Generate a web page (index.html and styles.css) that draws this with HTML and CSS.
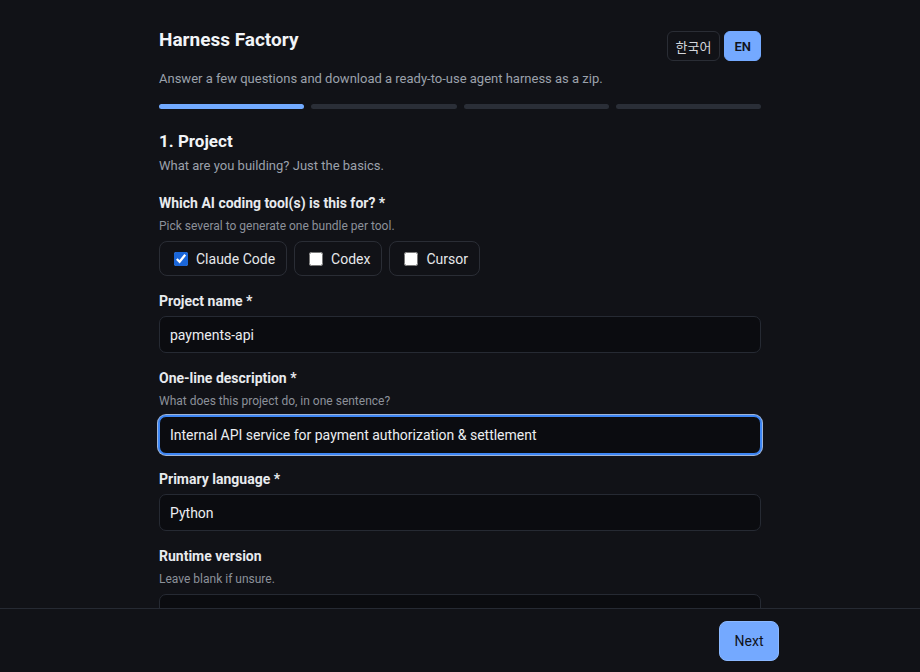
FILE: index.html
```html
<!DOCTYPE html>
<html lang="en">
<head>
  <meta charset="UTF-8">
  <meta name="viewport" content="width=device-width, initial-scale=1.0">
  <title>Harness Factory</title>
  <link rel="stylesheet" href="styles.css">
</head>
<body>
  <main class="wizard">
    <header class="top">
      <h1>Harness Factory</h1>
      <div class="lang">
        <button class="lang-btn">한국어</button>
        <button class="lang-btn active">EN</button>
      </div>
    </header>
    <p class="intro">Answer a few questions and download a ready-to-use agent harness as a zip.</p>

    <div class="progress">
      <span class="step done"></span>
      <span class="step"></span>
      <span class="step"></span>
      <span class="step"></span>
    </div>

    <section class="stage">
      <h2>1. Project</h2>
      <p class="stage-desc">What are you building? Just the basics.</p>

      <div class="field">
        <label class="label">Which AI coding tool(s) is this for? *</label>
        <p class="hint">Pick several to generate one bundle per tool.</p>
        <div class="chips">
          <label class="chip"><input type="checkbox" checked> Claude Code</label>
          <label class="chip"><input type="checkbox"> Codex</label>
          <label class="chip"><input type="checkbox"> Cursor</label>
        </div>
      </div>

      <div class="field">
        <label class="label" for="name">Project name *</label>
        <input class="text" id="name" type="text" value="payments-api">
      </div>

      <div class="field">
        <label class="label" for="desc">One-line description *</label>
        <p class="hint">What does this project do, in one sentence?</p>
        <input class="text focused" id="desc" type="text" value="Internal API service for payment authorization &amp; settlement">
      </div>

      <div class="field">
        <label class="label" for="lang">Primary language *</label>
        <input class="text" id="lang" type="text" value="Python">
      </div>

      <div class="field">
        <label class="label" for="runtime">Runtime version</label>
        <p class="hint">Leave blank if unsure.</p>
        <input class="text" id="runtime" type="text">
      </div>
    </section>
  </main>

  <footer class="actions">
    <div class="actions-inner">
      <button class="next">Next</button>
    </div>
  </footer>
</body>
</html>
```

FILE: styles.css
```css
/* Reset */
* {
  margin: 0;
  padding: 0;
  box-sizing: border-box;
}

body {
  font-family: Roboto, "Noto Sans", "Noto Sans CJK KR", sans-serif;
  background: #111217;
  color: #e6e8eb;
  overflow: hidden;
}

/* Page column */
.wizard {
  width: 602px;
  margin: 0 auto;
  padding: 28px 0 80px;
}

.top {
  display: flex;
  justify-content: space-between;
  align-items: flex-start;
}

.top h1 {
  font-size: 19px;
  line-height: 24px;
  font-weight: 700;
  color: #f2f4f7;
}

.lang {
  display: flex;
  gap: 4px;
  margin-top: 3px;
}

.lang-btn {
  height: 30px;
  padding: 0 8px;
  font-family: inherit;
  font-size: 13px;
  color: #d4d7dc;
  background: transparent;
  border: 1px solid #2a2d35;
  border-radius: 6px;
}

.lang-btn.active {
  padding: 0 9px;
  background: #74a9ff;
  border-color: #74a9ff;
  color: #10131a;
  font-weight: 600;
}

.intro {
  margin-top: 9px;
  font-size: 13px;
  line-height: 18px;
  color: #9ba1ab;
}

/* Step bar */
.progress {
  display: flex;
  gap: 7px;
  margin-top: 16px;
}

.step {
  flex: 1;
  height: 5px;
  border-radius: 3px;
  background: #2a2e37;
}

.step.done {
  background: #72aaff;
}

/* Form */
.stage h2 {
  margin-top: 21px;
  font-size: 17px;
  line-height: 22px;
  font-weight: 700;
  color: #f2f4f7;
}

.stage-desc {
  margin-top: 5px;
  font-size: 13px;
  line-height: 18px;
  color: #9ba1ab;
}

.field {
  margin-top: 15px;
}

.stage-desc + .field {
  margin-top: 18px;
}

.label {
  display: block;
  font-size: 14px;
  line-height: 20px;
  font-weight: 700;
  color: #e8eaee;
  margin-bottom: 5px;
}

.hint {
  font-size: 12px;
  line-height: 16px;
  color: #8c919a;
  margin: 1px 0 7px;
}

.chips {
  display: flex;
  gap: 7px;
}

.chip {
  display: flex;
  align-items: center;
  gap: 8px;
  height: 35px;
  padding: 0 11px 0 14px;
  font-size: 14px;
  color: #e6e8eb;
  border: 1px solid #2a2d35;
  border-radius: 8px;
}

.chip input {
  width: 14px;
  height: 14px;
  margin: 0;
  accent-color: #1a66d9;
}

.text {
  display: block;
  width: 100%;
  height: 37px;
  padding: 0 10px;
  font-family: inherit;
  font-size: 14px;
  color: #eceef1;
  background: #0b0c10;
  border: 1px solid #262a33;
  border-radius: 7px;
  outline: none;
}

.text.focused {
  height: 38px;
  border-color: #3d86f5;
  box-shadow: 0 0 0 1px #3d86f5, 0 0 0 2px #9fb4d6;
}

/* Sticky footer */
.actions {
  position: fixed;
  left: 0;
  right: 0;
  bottom: 0;
  height: 64px;
  background: #111217;
  border-top: 1px solid #262a33;
}

.actions-inner {
  width: 638px;
  height: 100%;
  margin: 0 auto;
  display: flex;
  justify-content: flex-end;
  align-items: center;
}

.next {
  width: 60px;
  height: 40px;
  font-family: inherit;
  font-size: 14px;
  color: #10131a;
  background: #74a9ff;
  border: 1px solid #8bb8ff;
  border-radius: 8px;
}
```
